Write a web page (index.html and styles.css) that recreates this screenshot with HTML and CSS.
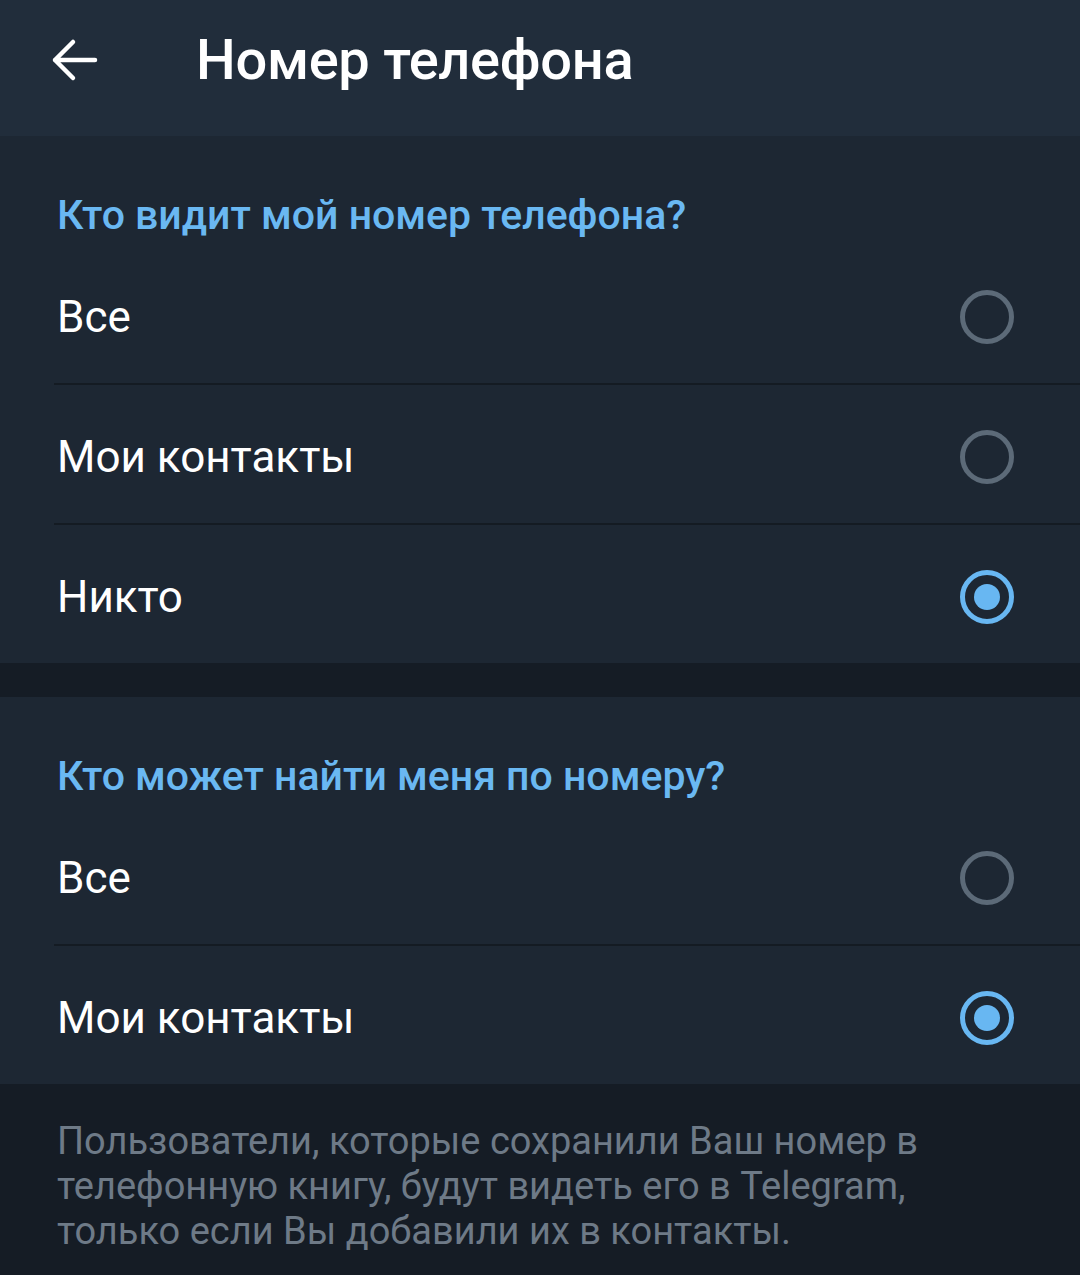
FILE: index.html
```html
<!DOCTYPE html>
<html lang="ru">
<head>
    <meta charset="UTF-8">
    <meta name="viewport" content="width=device-width, initial-scale=1.0">
    <title>Номер телефона</title>
    <link rel="stylesheet" href="styles.css">
</head>
<body>

    <!-- Top bar -->
    <div class="topbar">
        <svg class="back-icon" viewBox="0 0 48 48" width="48" height="48">
            <path d="M45 24H5M23 6L5 24l18 18" fill="none" stroke="#fff" stroke-width="4.5" stroke-linecap="round" stroke-linejoin="round"/>
        </svg>
        <h1 class="title">Номер телефона</h1>
    </div>

    <!-- Who sees my number -->
    <div class="section">
        <div class="section-title">Кто видит мой номер телефона?</div>
        <div class="option">
            <span>Все</span>
            <span class="radio"></span>
        </div>
        <div class="option">
            <span>Мои контакты</span>
            <span class="radio"></span>
        </div>
        <div class="option">
            <span>Никто</span>
            <span class="radio checked"></span>
        </div>
    </div>

    <div class="spacer"></div>

    <!-- Who can find me -->
    <div class="section">
        <div class="section-title">Кто может найти меня по номеру?</div>
        <div class="option">
            <span>Все</span>
            <span class="radio"></span>
        </div>
        <div class="option">
            <span>Мои контакты</span>
            <span class="radio checked"></span>
        </div>
    </div>

    <p class="hint">Пользователи, которые сохранили Ваш номер в телефонную книгу, будут видеть его в Telegram, только если Вы добавили их в контакты.</p>

</body>
</html>
```

FILE: styles.css
```css
body {
    margin: 0;
    background-color: #151c25;
    font-family: Roboto, "Noto Sans", sans-serif;
    color: #fff;
    height: 1275px;
}
.topbar {
    height: 136px;
    background-color: #212d3b;
    display: flex;
    align-items: center;
    padding-left: 50px;
}
.back-icon {
    display: block;
    margin-top: -16px;
}
.title {
    margin: -16px 0 0 98px;
    font-size: 56px;
    font-weight: 500;
    letter-spacing: -0.3px;
}
.section {
    background-color: #1d2733;
    padding-top: 52px;
}
.section-title {
    color: #6ab8f2;
    font-size: 41px;
    font-weight: 500;
    padding-left: 57px;
    height: 54px;
    line-height: 54px;
    margin-bottom: 3px;
}
.option {
    display: flex;
    align-items: center;
    justify-content: space-between;
    height: 132px;
    margin-left: 54px;
    padding: 6px 66px 0 3px;
    font-size: 44px;
    border-bottom: 2px solid #141b23;
}
.option:last-child {
    border-bottom: none;
}
.radio {
    width: 44px;
    height: 44px;
    border: 5px solid #5c6a78;
    border-radius: 50%;
    display: flex;
    align-items: center;
    justify-content: center;
}
.radio.checked {
    border-color: #68b7f2;
}
.radio.checked::after {
    content: "";
    width: 26px;
    height: 26px;
    border-radius: 50%;
    background-color: #68b7f2;
}
.spacer {
    height: 34px;
}
.hint {
    margin: 0;
    padding: 35px 80px 0 57px;
    font-size: 38px;
    line-height: 45px;
    color: #6e7a87;
}
```
